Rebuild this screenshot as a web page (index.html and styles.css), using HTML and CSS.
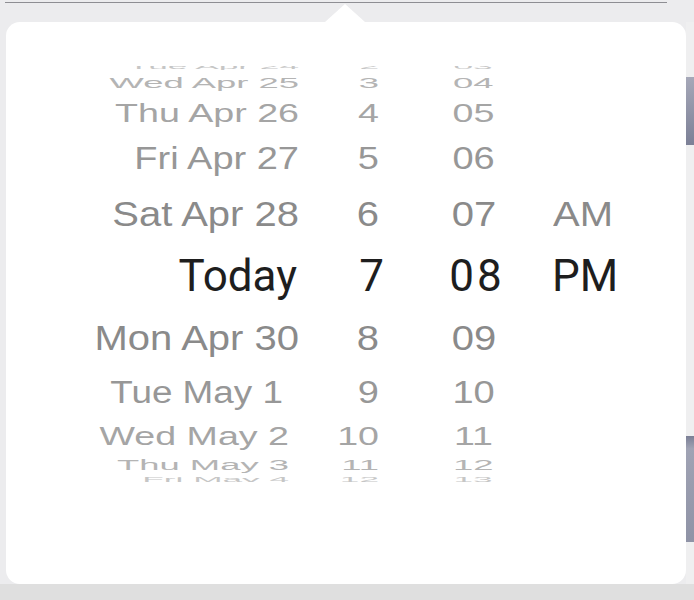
FILE: index.html
```html
<!DOCTYPE html>
<html lang="en">
<head>
  <meta charset="UTF-8" />
  <meta name="viewport" content="width=device-width, initial-scale=1.0" />
  <title>Date Picker</title>
  <link rel="stylesheet" href="styles.css">
</head>
<body>
  <div class="topline"></div>
  <div class="stage">
    <div class="popover">
      <div class="wheel">
        <div class="rows">
          <div class="row r5 top"><span class="date">Tue Apr 24</span><span class="hour">2</span><span class="min">03</span><span class="ampm"></span></div>
          <div class="row r4 top"><span class="date">Wed Apr 25</span><span class="hour">3</span><span class="min">04</span><span class="ampm"></span></div>
          <div class="row r3 top"><span class="date">Thu Apr 26</span><span class="hour">4</span><span class="min">05</span><span class="ampm"></span></div>
          <div class="row r2 top"><span class="date">Fri Apr 27</span><span class="hour">5</span><span class="min">06</span><span class="ampm"></span></div>
          <div class="row r1 top"><span class="date">Sat Apr 28</span><span class="hour">6</span><span class="min">07</span><span class="ampm">AM</span></div>
          <div class="row selected"><span class="date">Today</span><span class="hour">7</span><span class="min">08</span><span class="ampm">PM</span></div>
          <div class="row r1 bottom"><span class="date">Mon Apr 30</span><span class="hour">8</span><span class="min">09</span><span class="ampm"></span></div>
          <div class="row r2 bottom shift-more"><span class="date">Tue May 1</span><span class="hour">9</span><span class="min">10</span><span class="ampm"></span></div>
          <div class="row r3 bottom shift"><span class="date">Wed May 2</span><span class="hour">10</span><span class="min">11</span><span class="ampm"></span></div>
          <div class="row r4 bottom shift"><span class="date">Thu May 3</span><span class="hour">11</span><span class="min">12</span><span class="ampm"></span></div>
          <div class="row r5 bottom shift"><span class="date">Fri May 4</span><span class="hour">12</span><span class="min">13</span><span class="ampm"></span></div>
        </div>
      </div>
    </div>
    <div class="side">
      <div class="bar bar-one"></div>
      <div class="bar bar-two"></div>
    </div>
  </div>
  <div class="band"></div>
</body>
</html>
```

FILE: styles.css
```css
body {
  margin: 0;
  height: 600px;
  overflow: hidden;
  background: #ececee;
  font-family: "Liberation Sans", Arial, sans-serif;
}
.topline {
  height: 1px;
  width: 662px;
  margin: 2px 0 0 5px;
  background: #8e8e93;
}
.stage {
  display: flex;
  margin-top: 19px;
  padding-left: 6px;
  height: 562px;
}
.popover {
  position: relative;
  width: 680px;
  background: #fff;
  border-radius: 14px;
}
.popover::before {
  content: "";
  position: absolute;
  left: 319px;
  top: -18px;
  width: 40px;
  height: 18px;
  background: #fff;
  clip-path: polygon(50% 0, 100% 100%, 0 100%);
}
.side {
  flex: 1;
  display: flex;
  flex-direction: column;
  background: #efeff0;
}
.bar {
  margin-top: 55px;
  height: 68px;
  background: linear-gradient(#a6a8b8, #7c8096);
}
.bar-two {
  margin-top: 291px;
  height: 106px;
  background: linear-gradient(#7b7f95, #a0a3b4 12%, #8f93a6);
}
.wheel {
  margin-top: 44px;
  height: 416px;
  overflow: hidden;
}
.rows {
  margin-top: -7px;
}
.row {
  display: flex;
  align-items: center;
  font-size: 40px;
  color: #8a8a8a;
  white-space: nowrap;
}
.row span {
  display: block;
  flex: none;
  line-height: 1;
}
.date {
  width: 293px;
  text-align: right;
  transform-origin: right center;
}
.hour {
  width: 80px;
  text-align: right;
  transform-origin: right center;
}
.min {
  width: 174px;
  box-sizing: border-box;
  padding-left: 16px;
  text-align: center;
}
.ampm {
  width: 100px;
  text-align: left;
  transform-origin: left center;
}
.selected {
  height: 62px;
  font-family: Roboto, "Liberation Sans", sans-serif;
  font-size: 44px;
  color: #1e1e1e;
}
.selected .date {
  translate: -2px 0;
}
.selected .hour {
  translate: 5px 0;
}
.selected .min {
  letter-spacing: 3px;
  translate: 3px 0;
}
.selected .ampm {
  translate: -1px 0;
}
.r5.top { height: 14px; }
.r4.top { height: 20px; }
.r3.top { height: 40px; }
.r2.top { height: 50px; }
.r1.top { height: 62px; }
.r1.bottom { height: 62px; }
.r2.bottom { height: 46px; }
.r3.bottom { height: 42px; }
.r4.bottom { height: 16px; }
.r5.bottom { height: 12px; }
.r1 span { transform: scale(1, 0.86); }
.r2 span { transform: scale(0.95, 0.78); }
.r3 span { transform: scale(0.94, 0.64); }
.r4 span { transform: scale(0.91, 0.38); }
.r5 span { transform: scale(0.88, 0.18); }
.r2 { color: #979797; }
.r3 { color: #a5a5a5; }
.r4 { color: #b4b4b4; }
.r5 { color: #c6c6c6; }
.shift .date {
  translate: -10px 0;
}
.shift-more .date {
  translate: -16px 0;
  scale: 0.97 1;
}
.band {
  height: 16px;
  background: #dfdfdf;
}
```
